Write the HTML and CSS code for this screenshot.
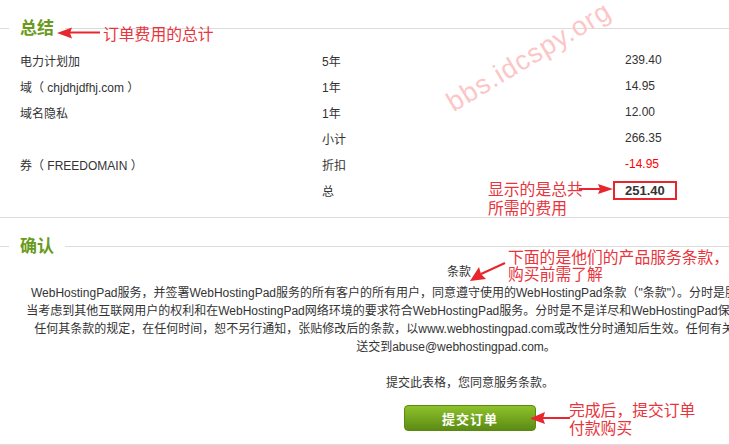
FILE: index.html
```html
<!DOCTYPE html>
<html lang="zh-CN">
<head>
  <meta charset="UTF-8" />
  <title>订单确认</title>
  <link rel="stylesheet" href="styles.css">
</head>
<body>
  <div class="page">

    <section class="block summary">
      <h2 class="legend"><span>总结</span></h2>
      <div class="totals">
        <div class="row"><span>电力计划加</span><span>5年</span><span>239.40</span></div>
        <div class="row"><span>域（ chjdhjdfhj.com ）</span><span>1年</span><span>14.95</span></div>
        <div class="row"><span>域名隐私</span><span>1年</span><span>12.00</span></div>
        <div class="row"><span></span><span>小计</span><span>266.35</span></div>
        <div class="row"><span>券（ FREEDOMAIN ）</span><span>折扣</span><span class="minus">-14.95</span></div>
        <div class="row"><span></span><span>总</span><span><b class="grand">251.40</b></span></div>
      </div>
    </section>

    <section class="block confirm">
      <h2 class="legend"><span>确认</span></h2>
      <h3 class="terms-title">条款</h3>
      <p class="terms">
        WebHostingPad服务，并签署WebHostingPad服务的所有客户的所有用户，同意遵守使用的WebHostingPad条款（"条款"）。分时是服务协议的一部分，包括所有<br>
        当考虑到其他互联网用户的权利和在WebHostingPad网络环境的要求符合WebHostingPad服务。分时是不是详尽和WebHostingPad保留修改本政策及其条款的权利<br>
        任何其条款的规定，在任何时间，恕不另行通知，张贴修改后的条款，以www.webhostingpad.com或改性分时通知后生效。任何有关投诉应通过电子邮件或书面<br>
        送交到abuse@webhostingpad.com。
      </p>
      <p class="agree">提交此表格，您同意服务条款。</p>
      <div class="actions">
        <button type="submit">提交订单</button>
      </div>
    </section>

    <!-- annotations drawn over the page -->
    <div class="watermark">bbs.idcspy.org</div>

    <svg class="arrow a1" width="46" height="12" viewBox="0 0 46 12">
      <path d="M14 5.5 H44" stroke="#e8262d" stroke-width="2"/>
      <path d="M1 6 L16 0.5 L14 6 L16 11.5 Z" fill="#e8262d"/>
    </svg>
    <div class="note n1">订单费用的总计</div>

    <svg class="arrow a2" width="36" height="12" viewBox="0 0 36 12">
      <path d="M1 6 H24" stroke="#e8262d" stroke-width="2"/>
      <path d="M35 6 L20 1 L22 6 L20 11 Z" fill="#e8262d"/>
    </svg>
    <div class="note n2">显示的是总共<br>所需的费用</div>

    <svg class="arrow a3" width="40" height="26" viewBox="0 0 40 26">
      <path d="M38 4 L14 15" stroke="#e8262d" stroke-width="2"/>
      <path d="M3 22 L12 8 L14 15 L19 20 Z" fill="#e8262d"/>
    </svg>
    <div class="note n3">下面的是他们的产品服务条款，<br>购买前需了解</div>

    <svg class="arrow a4" width="42" height="14" viewBox="0 0 42 14">
      <path d="M14 7 H41" stroke="#e8262d" stroke-width="2"/>
      <path d="M1 7.5 L16 1 L14 7.5 L16 13 Z" fill="#e8262d"/>
    </svg>
    <div class="note n4">完成后，提交订单<br>付款购买</div>

  </div>
</body>
</html>
```

FILE: styles.css
```css
body {
  margin: 0;
  padding: 0;
  background-color: #fff;
  overflow: hidden;
  font-family: 'Liberation Sans', 'Noto Sans CJK SC', sans-serif;
  font-size: 12px;
  color: #333;
}

.page {
  position: relative;
  width: 940px;
}

.block {
  border-bottom: 1px solid #dcdcdc;
}

.summary {
  padding: 19px 0 14px;
}

.confirm {
  padding: 19px 0 13px;
}

/* legend-like heading sitting on a rule */
.legend {
  display: flex;
  align-items: center;
  margin: 0;
  height: 19px;
  font-size: 17px;
  line-height: 19px;
  font-weight: bold;
  color: #6a9a1c;
}

.legend::before,
.legend::after {
  content: "";
  height: 1px;
  background-color: #dcdcdc;
}

.legend::before {
  width: 9px;
  margin-right: 11px;
}

.legend::after {
  flex: 1;
  margin-left: 11px;
}

.totals {
  margin-top: 9px;
}

.row {
  display: grid;
  grid-template-columns: 302px 303px 1fr;
  align-items: center;
  height: 26px;
  padding-left: 20px;
}

.minus {
  color: #f00;
}

.grand {
  display: inline-block;
  margin-left: -12px;
  padding: 0 10px;
  line-height: 15px;
  font-size: 13px;
  border: 2px solid #e8262d;
}

.terms-title {
  margin: 7px 0 0;
  padding-right: 22px;
  font-size: 12px;
  font-weight: normal;
  line-height: 18px;
  text-align: center;
}

.terms {
  margin: 3px 0 0;
  padding-right: 28px;
  line-height: 18px;
  text-align: center;
  white-space: nowrap;
}

.agree {
  margin: 18px 0 0;
  line-height: 18px;
  text-align: center;
}

.actions {
  display: flex;
  justify-content: center;
  margin-top: 13px;
}

.actions button {
  width: 132px;
  height: 26px;
  border: 1px solid #5a8912;
  border-radius: 4px;
  background: linear-gradient(#8dc22b, #5c8b14);
  color: #fff;
  font-family: 'Liberation Sans', 'Noto Sans CJK SC', sans-serif;
  font-size: 13px;
  font-weight: bold;
  letter-spacing: 1px;
  cursor: pointer;
}

/* annotations */
.note {
  position: absolute;
  color: #e8353d;
  font-family: 'Noto Sans CJK SC', sans-serif;
  font-size: 15.8px;
  white-space: nowrap;
}

.n1 { left: 103px; top: 25px; line-height: 18px; }
.n2 { left: 488px; top: 179px; line-height: 19px; }
.n3 { left: 508px; top: 248px; line-height: 17px; }
.n4 { left: 569px; top: 401px; line-height: 18px; }

.arrow {
  position: absolute;
}

.a1 { left: 56px; top: 27px; }
.a2 { left: 578px; top: 183px; }
.a3 { left: 467px; top: 259px; }
.a4 { left: 529px; top: 411px; }

.watermark {
  position: absolute;
  left: 529px;
  top: 57px;
  transform: translate(-50%, -50%) rotate(-31deg);
  color: #fcc6c6;
  font-size: 27px;
  letter-spacing: 1px;
  white-space: nowrap;
}
```
